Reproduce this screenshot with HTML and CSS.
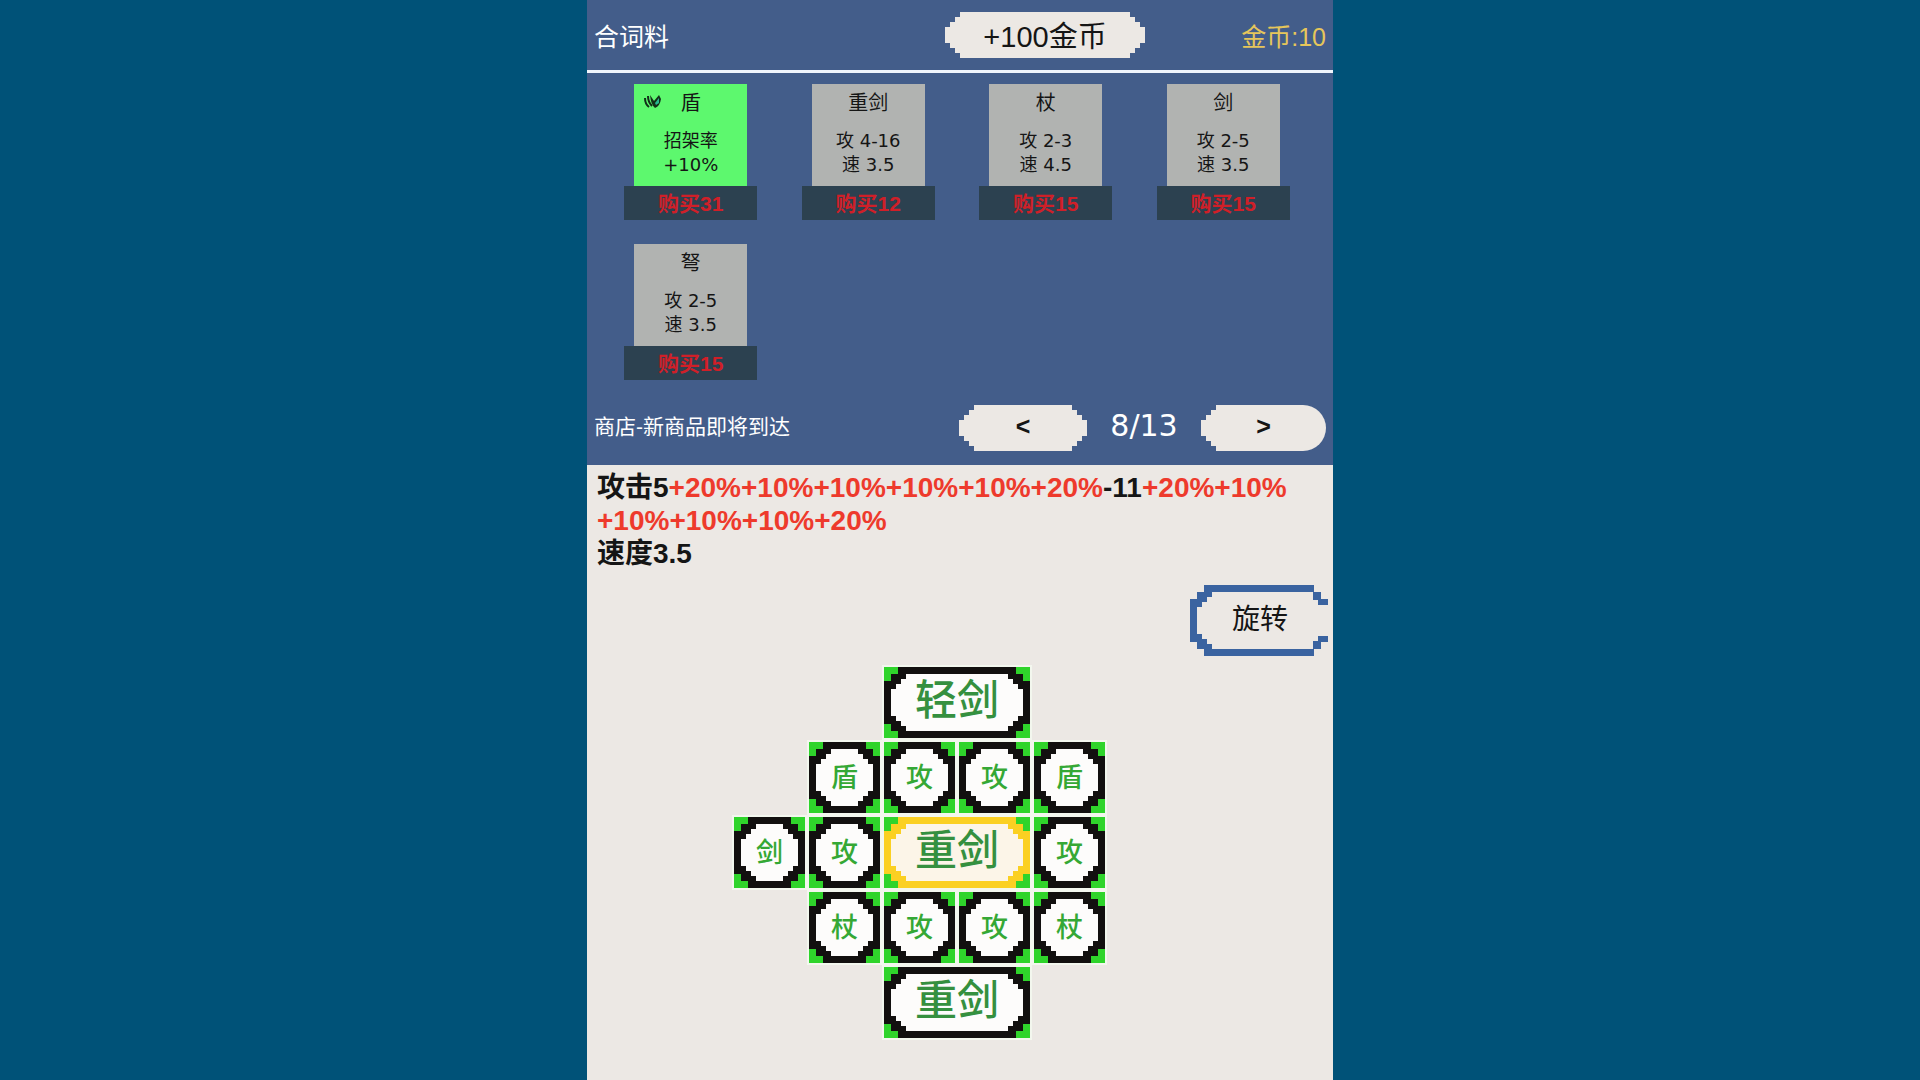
FILE: index.html
```
<!DOCTYPE html>
<html lang="zh-CN">
<head>
<meta charset="UTF-8">
<meta name="viewport" content="width=device-width, initial-scale=1.0">
<title>商店</title>
<link rel="stylesheet" href="styles.css">
</head>
<body>
  <main class="game">
    <section class="shop">
      <header class="topbar">
        <h1 class="topbar-title">合词料</h1>
        <button class="pixel-btn add-gold">+100金币</button>
        <div class="gold">金币:10</div>
      </header>

      <div class="cards">
        <div class="card selected">
          <div class="card-body">
            <svg class="card-mark" viewBox="0 0 18 16" aria-hidden="true">
              <path d="M1 5 Q1 11 5 14 M4 3 Q4 9 8 13" fill="none" stroke="#123018" stroke-width="2"/>
              <path d="M6 2 L10 8 L15 2 L17 6 Q16 13 11 15 Q7 12 6 2 Z" fill="#123018"/>
              <path d="M11 10 L15 5 L15 10 L12 12 Z" fill="#28b890"/>
            </svg>
            <div class="card-name">盾</div>
            <div>招架率</div>
            <div>+10%</div>
          </div>
          <button class="price">购买31</button>
        </div>
        <div class="card">
          <div class="card-body">
            <div class="card-name">重剑</div>
            <div>攻 4-16</div>
            <div>速 3.5</div>
          </div>
          <button class="price">购买12</button>
        </div>
        <div class="card">
          <div class="card-body">
            <div class="card-name">杖</div>
            <div>攻 2-3</div>
            <div>速 4.5</div>
          </div>
          <button class="price">购买15</button>
        </div>
        <div class="card">
          <div class="card-body">
            <div class="card-name">剑</div>
            <div>攻 2-5</div>
            <div>速 3.5</div>
          </div>
          <button class="price">购买15</button>
        </div>
        <div class="card">
          <div class="card-body">
            <div class="card-name">弩</div>
            <div>攻 2-5</div>
            <div>速 3.5</div>
          </div>
          <button class="price">购买15</button>
        </div>
      </div>

      <div class="pager">
        <div class="pager-note">商店-新商品即将到达</div>
        <button class="pixel-btn page-btn">&lt;</button>
        <div class="page-num">8/13</div>
        <button class="pixel-btn page-btn next">&gt;</button>
      </div>
    </section>

    <section class="stats">
      <p>攻击5<span class="bonus">+20%</span><span class="bonus">+10%</span><span class="bonus">+10%</span><span class="bonus">+10%</span><span class="bonus">+10%</span><span class="bonus">+20%</span>-11<span class="bonus">+20%</span><span class="bonus">+10%</span><span class="bonus">+10%</span><span class="bonus">+10%</span><span class="bonus">+10%</span><span class="bonus">+20%</span></p>
      <p>速度3.5</p>
    </section>

    <div class="actions">
      <button class="rotate"><span class="rotate-face">旋转</span></button>
    </div>

    <section class="board">
      <button class="tile wide r1 c3"><span class="frame"><span class="face">轻剑</span></span></button>

      <button class="tile r2 c2"><span class="frame"><span class="face">盾</span></span></button>
      <button class="tile r2 c3"><span class="frame"><span class="face">攻</span></span></button>
      <button class="tile r2 c4"><span class="frame"><span class="face">攻</span></span></button>
      <button class="tile r2 c5"><span class="frame"><span class="face">盾</span></span></button>

      <button class="tile r3 c1"><span class="frame"><span class="face">剑</span></span></button>
      <button class="tile r3 c2"><span class="frame"><span class="face">攻</span></span></button>
      <button class="tile wide active r3 c3"><span class="frame"><span class="face">重剑</span></span></button>
      <button class="tile r3 c5"><span class="frame"><span class="face">攻</span></span></button>

      <button class="tile r4 c2"><span class="frame"><span class="face">杖</span></span></button>
      <button class="tile r4 c3"><span class="frame"><span class="face">攻</span></span></button>
      <button class="tile r4 c4"><span class="frame"><span class="face">攻</span></span></button>
      <button class="tile r4 c5"><span class="frame"><span class="face">杖</span></span></button>

      <button class="tile wide r5 c3"><span class="frame"><span class="face">重剑</span></span></button>
    </section>
  </main>
</body>
</html>
```
FILE: styles.css
```
:root {
  /* stepped corners, three steps of 5px */
  --pixel: polygon(
    15px 0, calc(100% - 15px) 0, calc(100% - 15px) 5px, calc(100% - 10px) 5px,
    calc(100% - 10px) 10px, calc(100% - 5px) 10px, calc(100% - 5px) 15px, 100% 15px,
    100% calc(100% - 15px), calc(100% - 5px) calc(100% - 15px), calc(100% - 5px) calc(100% - 10px), calc(100% - 10px) calc(100% - 10px),
    calc(100% - 10px) calc(100% - 5px), calc(100% - 15px) calc(100% - 5px), calc(100% - 15px) 100%, 15px 100%,
    15px calc(100% - 5px), 10px calc(100% - 5px), 10px calc(100% - 10px), 5px calc(100% - 10px),
    5px calc(100% - 15px), 0 calc(100% - 15px), 0 15px, 5px 15px,
    5px 10px, 10px 10px, 10px 5px, 15px 5px);
  /* same idea, two steps of 7px */
  --pixel-outer: polygon(
    14px 0, calc(100% - 14px) 0, calc(100% - 14px) 7px, calc(100% - 7px) 7px,
    calc(100% - 7px) 14px, 100% 14px, 100% calc(100% - 14px), calc(100% - 7px) calc(100% - 14px),
    calc(100% - 7px) calc(100% - 7px), calc(100% - 14px) calc(100% - 7px), calc(100% - 14px) 100%, 14px 100%,
    14px calc(100% - 7px), 7px calc(100% - 7px), 7px calc(100% - 14px), 0 calc(100% - 14px),
    0 14px, 7px 14px, 7px 7px, 14px 7px);
}

* {
  box-sizing: border-box;
}

body {
  margin: 0;
  background: #005278;
  font-family: "Liberation Sans", "Noto Sans CJK SC", sans-serif;
  color: #151515;
}

button {
  margin: 0;
  padding: 0;
  border: none;
  font-family: inherit;
  color: inherit;
  cursor: pointer;
}

p {
  margin: 0;
}

.game {
  max-width: 746px;
  min-height: 100vh;
  margin: 0 auto;
  background: #ece8e4;
}

.shop {
  background: #435d8a;
  color: #fff;
}

.topbar {
  display: flex;
  align-items: center;
  height: 73px;
  padding: 0 7px;
  border-bottom: 3px solid #f0f5fc;
}

.topbar-title {
  margin: 0;
  font-size: 25px;
  font-weight: 400;
}

.pixel-btn {
  height: 46px;
  padding-bottom: 3px;
  background: #ece8e4;
  color: #151515;
  clip-path: var(--pixel);
}

.add-gold {
  width: 200px;
  margin-left: auto;
  font-size: 29px;
}

.gold {
  width: 181px;
  text-align: right;
  font-size: 25px;
  color: #e6c65a;
}

.cards {
  display: grid;
  grid-template-columns: repeat(4, 1fr);
  row-gap: 24px;
  justify-items: center;
  padding: 11px 21px 25px 15px;
}

.card {
  display: flex;
  flex-direction: column;
  align-items: center;
}

.card-body {
  position: relative;
  width: 113px;
  height: 102px;
  padding-top: 7px;
  background: #b1b3b1;
  color: #151515;
  font-family: "DejaVu Sans", "Noto Sans CJK SC", sans-serif;
  font-size: 18px;
  line-height: 24px;
  text-align: center;
}

.card-name {
  margin-bottom: 14px;
  font-size: 20px;
}

.selected .card-body {
  background: #5df86e;
}

.card-mark {
  position: absolute;
  left: 10px;
  top: 9px;
  width: 18px;
  height: 16px;
}

.price {
  width: 133px;
  height: 34px;
  padding-bottom: 3px;
  background: #2c4150;
  color: #d01f28;
  font-size: 21px;
  font-weight: 700;
}

.pager {
  display: flex;
  align-items: center;
  padding: 0 7px 14px;
}

.pager-note {
  margin-right: auto;
  padding-bottom: 6px;
  font-size: 21px;
}

.page-btn {
  width: 128px;
  font-size: 25px;
  font-weight: 700;
}

.next {
  width: 125px;
  border-radius: 0 23px 23px 0;
  clip-path: polygon(
    15px 0, 100% 0, 100% 100%, 15px 100%,
    15px calc(100% - 5px), 10px calc(100% - 5px), 10px calc(100% - 10px), 5px calc(100% - 10px),
    5px calc(100% - 15px), 0 calc(100% - 15px), 0 15px, 5px 15px,
    5px 10px, 10px 10px, 10px 5px, 15px 5px);
}

.page-num {
  width: 114px;
  padding-bottom: 4px;
  text-align: center;
  font-family: "DejaVu Sans", sans-serif;
  font-size: 30px;
  line-height: 42px;
}

.stats {
  padding: 6px 10px 0;
  font-size: 28px;
  font-weight: 700;
  line-height: 33px;
}

.bonus {
  display: inline-block;
  color: #ee3a2c;
}

.actions {
  display: flex;
  justify-content: flex-end;
  padding: 15px 5px 11px;
}

.rotate {
  width: 138px;
  height: 71px;
  padding: 7px 0 7px 7px;
  background: #3a63a0;
  clip-path: var(--pixel-outer);
  font-size: 28px;
}

/* the frame is open in the middle of its right side */
.rotate-face {
  display: flex;
  align-items: center;
  justify-content: center;
  height: 100%;
  padding: 0 5px 8px 0;
  background: #ece8e4;
  clip-path: polygon(
    15px 0, calc(100% - 15px) 0, calc(100% - 15px) 8px, calc(100% - 10px) 8px,
    calc(100% - 10px) 13px, 100% 13px, 100% calc(100% - 13px), calc(100% - 10px) calc(100% - 13px),
    calc(100% - 10px) calc(100% - 8px), calc(100% - 15px) calc(100% - 8px), calc(100% - 15px) 100%, 15px 100%,
    15px calc(100% - 5px), 10px calc(100% - 5px), 10px calc(100% - 10px), 5px calc(100% - 10px),
    5px calc(100% - 15px), 0 calc(100% - 15px), 0 15px, 5px 15px,
    5px 10px, 10px 10px, 10px 5px, 15px 5px);
}

.board {
  display: grid;
  grid-template-columns: repeat(6, 71px);
  grid-auto-rows: 71px;
  gap: 4px;
  justify-content: center;
  padding: 0 6px 40px 0;
}

.tile {
  background: #2fd42b;
  outline: 2px solid #f3f7ee;
  color: #35a835;
  font-size: 27px;
  font-weight: 500;
}

.frame {
  display: block;
  height: 100%;
  padding: 7px;
  background: #12100f;
  clip-path: var(--pixel-outer);
}

.face {
  display: flex;
  align-items: center;
  justify-content: center;
  height: 100%;
  padding-bottom: 4px;
  background: #fdfcfb;
  clip-path: var(--pixel);
}

.wide {
  grid-column-end: span 2;
  color: #35903f;
  font-size: 42px;
}

.wide .face {
  padding-bottom: 12px;
}

.active .frame {
  background: #fbd022;
}

.active .face {
  background: #fcf5e8;
}

.r1 { grid-row: 1; }
.r2 { grid-row: 2; }
.r3 { grid-row: 3; }
.r4 { grid-row: 4; }
.r5 { grid-row: 5; }

.c1 { grid-column-start: 1; }
.c2 { grid-column-start: 2; }
.c3 { grid-column-start: 3; }
.c4 { grid-column-start: 4; }
.c5 { grid-column-start: 5; }
```
